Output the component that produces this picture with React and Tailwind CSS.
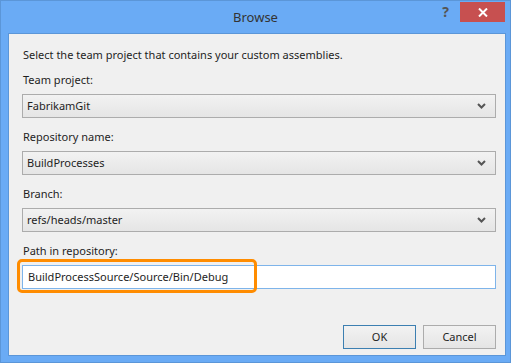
import React from "react";

const Chevron = () => (
  <svg width="9" height="6" viewBox="0 0 9 6" className="shrink-0">
    <path d="M1 1 L4.5 4.5 L8 1" fill="none" stroke="#555" strokeWidth="2" />
  </svg>
);

const Combo = ({ value }) => (
  <div className="flex h-[24px] items-center justify-between border border-[#acacac] bg-gradient-to-b from-[#f2f2f2] to-[#e5e5e5] pl-[4px] pr-[9px] text-[#1e1e1e]">
    <span>{value}</span>
    <Chevron />
  </div>
);

const Label = ({ children, className = "" }) => (
  <div className={`h-[16px] leading-[16px] text-[#1e1e1e] ${className}`}>{children}</div>
);

export default function App() {
  return (
    <div
      className="flex h-[363px] w-[511px] flex-col border border-[#5b96d8] bg-[#6aabf5] text-[11px]"
      style={{ fontFamily: '"Noto Sans", "Open Sans", sans-serif' }}
    >
      {/* title bar */}
      <div className="relative flex h-[32px] shrink-0 items-center justify-center">
        <span className="text-[13px] text-[#333] leading-none">Browse</span>
        <div className="absolute right-[5px] top-[1px] flex items-start">
          <span className="mr-[11px] mt-[3px] text-[14px] font-bold leading-none text-[#555]">?</span>
          <div className="flex h-[20px] w-[45px] items-center justify-center bg-[#c75050]">
            <svg width="10" height="9" viewBox="0 0 10 9">
              <path d="M1 0.5 L9 8.5 M9 0.5 L1 8.5" stroke="#fff" strokeWidth="2" />
            </svg>
          </div>
        </div>
      </div>

      {/* content */}
      <div className="ml-[7px] flex h-[323px] w-[498px] flex-col border border-[#5b96d8] bg-[#f0f0f0] pb-[6px] pl-[13px] pr-[9px] pt-[13px]">
        <div className="h-[16px] pl-[1px] leading-[16px] text-[#1e1e1e]">
          Select the team project that contains your custom assemblies.
        </div>

        <Label className="mt-[9px] pl-[1px]">Team project:</Label>
        <div className="mt-[6px]">
          <Combo value="FabrikamGit" />
        </div>

        <Label className="mt-[11px] pl-[1px]">Repository name:</Label>
        <div className="mt-[6px]">
          <Combo value="BuildProcesses" />
        </div>

        <Label className="mt-[11px] pl-[1px]">Branch:</Label>
        <div className="mt-[6px]">
          <Combo value="refs/heads/master" />
        </div>

        <Label className="mt-[11px] pl-[1px]">Path in repository:</Label>
        <div className="relative mt-[6px]">
          <div className="flex h-[24px] items-center border border-[#7eb4ea] bg-white pl-[5px] text-[#1e1e1e]">
            BuildProcessSource/Source/Bin/Debug
          </div>
          <span className="pointer-events-none absolute left-[-5px] top-[-6px] h-[34px] w-[240px] rounded-[5px] border-[3px] border-[#ff8c00]" />
        </div>

        <div className="mt-auto flex justify-end gap-[7px]">
          <button className="h-[24px] w-[73px] border border-[#3c7fb1] bg-gradient-to-b from-[#f2f2f2] to-[#e5e5e5] text-[#1e1e1e]">
            OK
          </button>
          <button className="h-[24px] w-[73px] border border-[#acacac] bg-gradient-to-b from-[#f2f2f2] to-[#e5e5e5] text-[#1e1e1e]">
            Cancel
          </button>
        </div>
      </div>
    </div>
  );
}
